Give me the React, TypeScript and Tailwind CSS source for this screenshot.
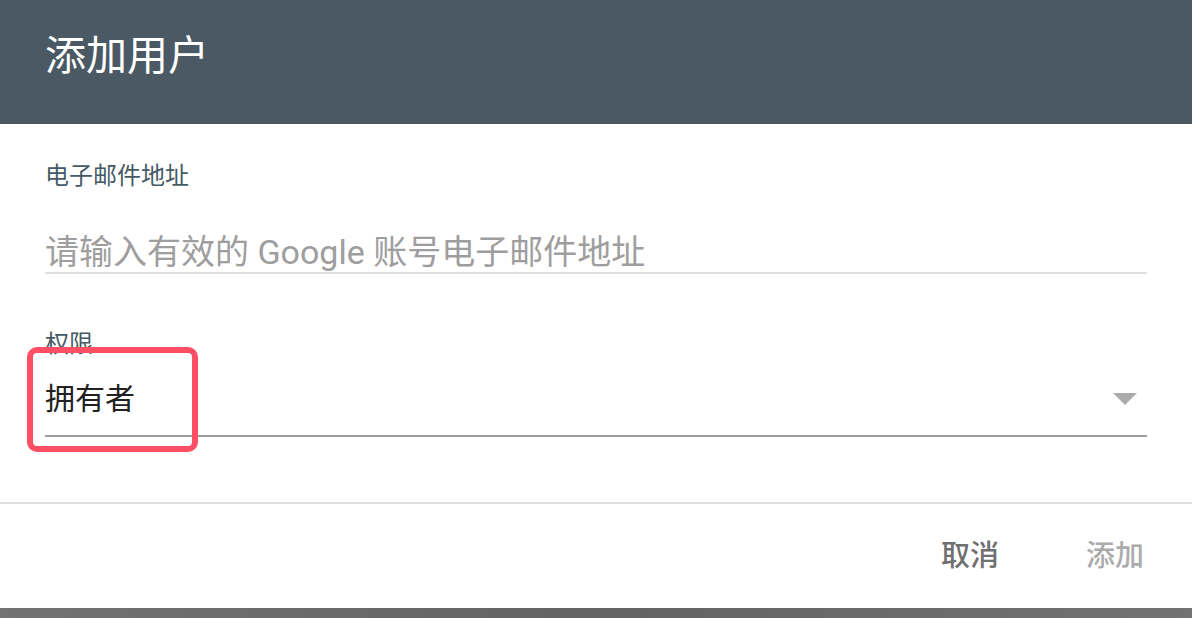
import React from 'react';

const font = { fontFamily: 'Roboto, "Noto Sans CJK SC", sans-serif' };

export default function App() {
  return (
    <div style={font} className="relative w-[1192px] h-[618px] bg-white flex flex-col overflow-hidden">
      {/* header */}
      <div className="h-[124px] bg-[#4a5964] px-[45px] pt-[32px]">
        <h1 className="text-[41px] leading-[48px] text-white">添加用户</h1>
      </div>

      {/* form */}
      <div className="px-[45px] flex flex-col">
        <label className="mt-[38px] text-[24px] leading-[28px] text-[#455a64]">电子邮件地址</label>
        <div className="mt-[42px] border-b-2 border-[#e0e0e0]">
          <input
            placeholder="请输入有效的 Google 账号电子邮件地址"
            className="w-full h-[40px] text-[34px] leading-[40px] outline-none placeholder:text-[#9e9e9e] text-[#212121]"
          />
        </div>

        <label className="mt-[56px] text-[24px] leading-[28px] text-[#455a64]">权限</label>
        <div className="relative mt-[22px] pb-[17px] border-b-2 border-[#9e9e9e] flex items-center justify-between">
          <span className="text-[30px] leading-[38px] text-[#212121]">拥有者</span>
          <svg width="24" height="12" viewBox="0 0 24 12" className="mr-[10px]">
            <path d="M0 0 L24 0 L12 12 Z" fill="#ababab" />
          </svg>
        </div>
      </div>

      {/* highlight annotation */}
      <div className="absolute left-[27px] top-[347px] w-[171px] h-[105px] border-[6px] border-[#ff4f65] rounded-[10px]" />

      <div className="mt-[65px] border-t-2 border-[#e0e0e0] flex-1 flex items-center justify-end pr-[48px] gap-[87px]">
        <button className="text-[29px] leading-[36px] font-medium text-[#707070]">取消</button>
        <button className="text-[29px] leading-[36px] font-medium text-[#ababab]">添加</button>
      </div>

      <div className="h-[10px] bg-gradient-to-r from-[#727272] via-[#636363] to-[#727272]" />
    </div>
  );
}
